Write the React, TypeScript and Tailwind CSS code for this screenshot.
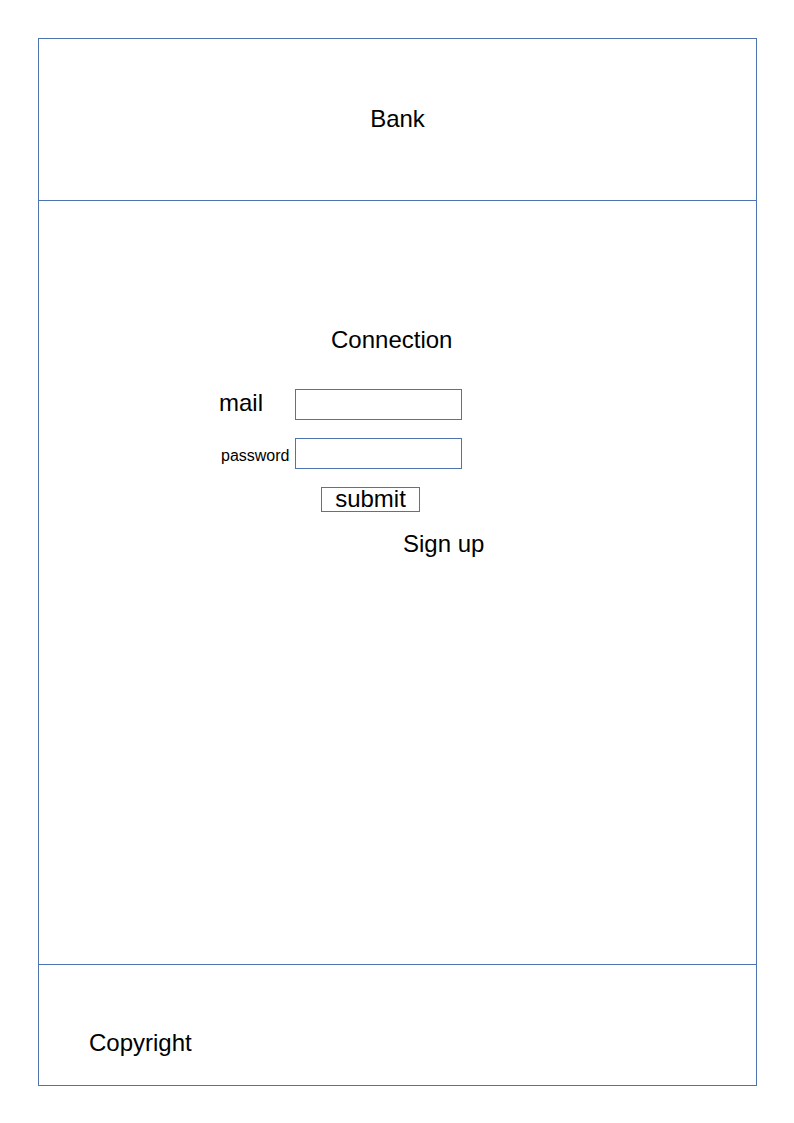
import React from "react";

export default function App() {
  return (
    <div className="min-h-[1123px] w-[794px] bg-white pt-[38px] pl-[38px] font-['Liberation_Sans',Arial,sans-serif] text-black">
      <div className="w-[719px] border border-[#4e74b0]">
        <header className="flex h-[162px] items-center justify-center border-b border-[#4e74b0] pb-[2px]">
          <span className="text-[24px] leading-[28px]">Bank</span>
        </header>
        <main className="h-[763px] pt-[125px]">
          <div className="ml-[292px] text-[24px] leading-[28px]">Connection</div>
          <div className="mt-[35px] ml-[180px] flex items-start">
            <label className="w-[76px] text-[24px] leading-[28px]">mail</label>
            <input type="text" className="h-[31px] w-[167px] border border-[#4e74b0] outline-none" />
          </div>
          <div className="mt-[18px] ml-[180px] flex items-center">
            <label className="w-[76px] pl-[2px] pt-[4px] text-[16px] leading-[20px]">password</label>
            <input type="password" className="h-[31px] w-[167px] border border-[#4e74b0] outline-none" />
          </div>
          <div className="mt-[18px] ml-[282px]">
            <button className="block h-[25px] w-[99px] border border-[#4e74b0] pb-[2px] text-center text-[24px] leading-[21px]">
              submit
            </button>
          </div>
          <div className="mt-[18px] ml-[364px] text-[24px] leading-[28px]">Sign up</div>
        </main>
        <footer className="h-[121px] border-t border-[#4e74b0] pt-[64px] pl-[50px]">
          <span className="text-[24px] leading-[28px]">Copyright</span>
        </footer>
      </div>
    </div>
  );
}
